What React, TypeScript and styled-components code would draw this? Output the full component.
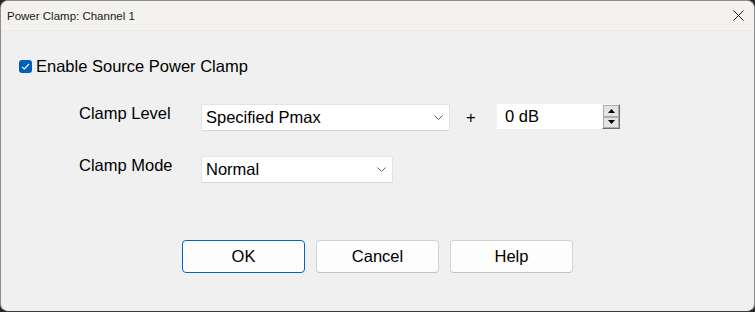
import styled, { createGlobalStyle } from "styled-components";

const GlobalStyle = createGlobalStyle`
    html, body {
        margin: 0;
        padding: 0;
        background: #262626;
        overflow: hidden;
    }
    * {
        box-sizing: border-box;
    }
`;

const Window = styled.div`
    width: 755px;
    height: 312px;
    display: flex;
    flex-direction: column;
    background: #f0f0f0;
    border: 1px solid #8c8c8c;
    border-bottom-color: #3a3a3a;
    border-radius: 8px;
    overflow: hidden;
    font-family: "Liberation Sans", Arial, sans-serif;
    color: #000;
`;

const TitleBar = styled.div`
    height: 30px;
    flex-shrink: 0;
    display: flex;
    align-items: center;
    justify-content: space-between;
    padding: 0 10px 0 6px;
    background: #f4f2ef;
    border-bottom: 1px solid #ebe9e6;
`;

const TitleText = styled.span`
    font-size: 11.5px;
    color: #1a1a1a;
`;

const CloseButton = styled.div`
    width: 12px;
    height: 12px;
    display: flex;
    align-items: center;
    justify-content: center;
`;

const Content = styled.div`
    flex: 1;
    display: flex;
    flex-direction: column;
    padding: 26px 18px 0 18px;
`;

const CheckRow = styled.label`
    display: flex;
    align-items: center;
    height: 19px;
    font-size: 16.5px;
    line-height: 19px;
    gap: 4px;
`;

const CheckBox = styled.span`
    width: 13px;
    height: 13px;
    border-radius: 3px;
    background: #005fb8;
    display: flex;
    align-items: center;
    justify-content: center;
`;

const Form = styled.div`
    display: flex;
    flex-direction: column;
    gap: 25px;
    margin-top: 28px;
    padding-left: 60px;
`;

const FormRow = styled.div`
    display: flex;
    align-items: flex-start;
`;

const Label = styled.div`
    width: 122px;
    font-size: 16.5px;
    line-height: 19px;
`;

const Select = styled.div<{ $width: number }>`
    width: ${(p) => p.$width}px;
    height: 27px;
    display: flex;
    align-items: center;
    justify-content: space-between;
    background: #fff;
    border: 1px solid #e3e3e3;
    border-bottom-color: #d6d6d6;
    border-radius: 2px;
    padding: 0 6px 0 4px;
    font-size: 16.5px;
`;

const Plus = styled.div`
    width: 47px;
    height: 27px;
    display: flex;
    align-items: center;
    padding-left: 16px;
    font-size: 16.5px;
`;

const SpinGroup = styled.div`
    display: flex;
    height: 25px;
`;

const SpinEdit = styled.div`
    width: 105px;
    height: 25px;
    background: #fff;
    display: flex;
    align-items: center;
    padding-left: 8px;
    font-size: 16.5px;
`;

const SpinButtons = styled.div`
    width: 18px;
    height: 25px;
    display: flex;
    flex-direction: column;
    border-top: 1px solid #f8f8f8;
    border-left: 1px solid #f8f8f8;
    border-right: 1px solid #6d6d6d;
    border-bottom: 1px solid #6d6d6d;
`;

const SpinButton = styled.div`
    flex: 1;
    display: flex;
    align-items: center;
    justify-content: center;
    background: #e3e3e3;
    border: 1px solid #adadad;
`;

const ButtonRow = styled.div`
    display: flex;
    justify-content: center;
    gap: 11px;
    margin-top: 57px;
`;

const Button = styled.button<{ $primary?: boolean }>`
    width: 123px;
    height: 33px;
    background: #fdfdfd;
    border: 1px solid ${(p) => (p.$primary ? "#0067c0" : "#d2d2d2")};
    border-bottom-color: ${(p) => (p.$primary ? "#0067c0" : "#c2c2c2")};
    border-radius: 4px;
    font-family: "Liberation Sans", Arial, sans-serif;
    font-size: 16.5px;
    color: #000;
    padding: 0;
`;

const Chevron = () => (
    <svg width="9" height="5" viewBox="0 0 9 5">
        <path d="M0.5 0.5 L4.5 4.5 L8.5 0.5" fill="none" stroke="#606060" strokeWidth="1" />
    </svg>
);

function App() {
    return (
        <>
            <GlobalStyle />
            <Window>
                <TitleBar>
                    <TitleText>Power Clamp: Channel 1</TitleText>
                    <CloseButton>
                        <svg width="11" height="11" viewBox="0 0 11 11">
                            <path d="M0.5 0.5 L10.5 10.5 M10.5 0.5 L0.5 10.5" stroke="#1a1a1a" strokeWidth="1" />
                        </svg>
                    </CloseButton>
                </TitleBar>
                <Content>
                    <CheckRow>
                        <CheckBox>
                            <svg width="9" height="7" viewBox="0 0 9 7">
                                <path d="M1 3.8 L3.3 6 L8 1" fill="none" stroke="#fff" strokeWidth="1.1" />
                            </svg>
                        </CheckBox>
                        Enable Source Power Clamp
                    </CheckRow>
                    <Form>
                        <FormRow>
                            <Label>Clamp Level</Label>
                            <Select $width={249}>
                                Specified Pmax
                                <Chevron />
                            </Select>
                            <Plus>+</Plus>
                            <SpinGroup>
                                <SpinEdit>0 dB</SpinEdit>
                                <SpinButtons>
                                    <SpinButton>
                                        <svg width="7" height="4" viewBox="0 0 7 4">
                                            <path d="M0 4 L3.5 0 L7 4 Z" fill="#000" />
                                        </svg>
                                    </SpinButton>
                                    <SpinButton>
                                        <svg width="7" height="4" viewBox="0 0 7 4">
                                            <path d="M0 0 L3.5 4 L7 0 Z" fill="#000" />
                                        </svg>
                                    </SpinButton>
                                </SpinButtons>
                            </SpinGroup>
                        </FormRow>
                        <FormRow>
                            <Label>Clamp Mode</Label>
                            <Select $width={192}>
                                Normal
                                <Chevron />
                            </Select>
                        </FormRow>
                    </Form>
                    <ButtonRow>
                        <Button $primary>OK</Button>
                        <Button>Cancel</Button>
                        <Button>Help</Button>
                    </ButtonRow>
                </Content>
            </Window>
        </>
    );
}

export default App;
